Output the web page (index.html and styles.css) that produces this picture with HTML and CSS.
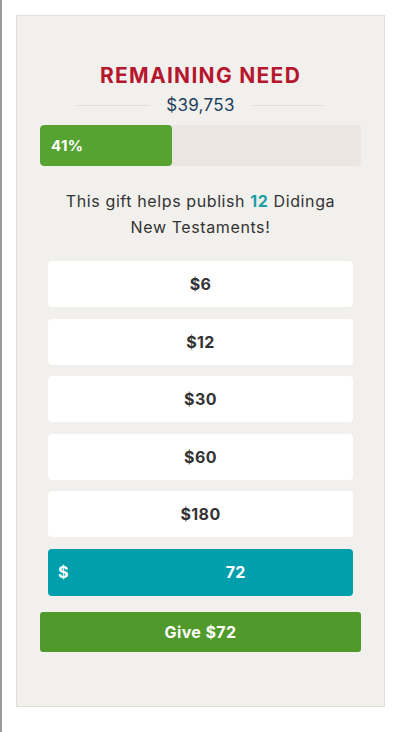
FILE: index.html
```html
<!DOCTYPE html>
<html lang="en">

<head>
    <meta charset="UTF-8">
    <meta name="viewport" content="width=device-width, initial-scale=1.0">
    <title>Didinga New Testament</title>
    <link rel="stylesheet" href="styles.css">
</head>

<body>
    <div class="frame">
        <div class="card">
            <h1 class="need-title">REMAINING NEED</h1>
            <div class="need-amount">
                <span class="rule"></span>
                <span>$39,753</span>
                <span class="rule"></span>
            </div>

            <div class="progress">
                <div class="progress-fill" style="width: 41%">41%</div>
            </div>

            <p class="impact">This gift helps publish <b>12</b> Didinga New Testaments!</p>

            <div class="amounts">
                <button class="amount">$6</button>
                <button class="amount">$12</button>
                <button class="amount">$30</button>
                <button class="amount">$60</button>
                <button class="amount">$180</button>
                <label class="custom">
                    <span class="custom-sign">$</span>
                    <input type="text" value="72">
                </label>
            </div>

            <button class="give">Give $72</button>
        </div>
    </div>
</body>

</html>
```

FILE: styles.css
```css
body {
    font-family: Inter, "Liberation Sans", sans-serif;
    margin: 0;
    padding: 0;
    background-color: #fff;
    color: #333;
}

.frame {
    height: 732px;
    box-sizing: border-box;
    border-left: 2px solid #9b9b9b;
    padding: 15px 15px 0 14px;
}

.card {
    height: 692px;
    box-sizing: border-box;
    background-color: #f2f0ed;
    border: 1px solid #e2dfdb;
    padding: 47px 23px 0 23px;
    text-align: center;
}

.need-title {
    margin: 0;
    font-size: 21px;
    line-height: 26px;
    font-weight: 700;
    letter-spacing: 1.3px;
    color: #b5172e;
}

.need-amount {
    display: flex;
    align-items: center;
    justify-content: center;
    gap: 16px;
    margin-top: 6px;
    font-size: 17px;
    line-height: 20px;
    letter-spacing: 0.3px;
    color: #1e3f5e;
}

.need-amount .rule {
    width: 74px;
    height: 1px;
    background-color: #e3e0dc;
}

.progress {
    margin-top: 10px;
    height: 41px;
    border-radius: 4px;
    background-color: #ebe6e2;
    overflow: hidden;
}

.progress-fill {
    height: 100%;
    box-sizing: border-box;
    padding-left: 11px;
    display: flex;
    align-items: center;
    border-radius: 4px;
    background-color: #56a332;
    color: #fff;
    font-weight: 700;
    font-size: 15px;
    letter-spacing: 0.4px;
}

.impact {
    margin: 22px 18px 0 18px;
    font-size: 16px;
    line-height: 26px;
    letter-spacing: 0.6px;
    color: #333;
}

.impact b {
    color: #1b9fa5;
}

.amounts {
    display: flex;
    flex-direction: column;
    gap: 11.5px;
    margin: 21px 8px 0 8px;
}

.amount {
    height: 46px;
    border: none;
    border-radius: 4px;
    background-color: #fff;
    font-family: inherit;
    font-size: 16px;
    font-weight: 700;
    letter-spacing: 0.4px;
    color: #333;
}

.custom {
    display: flex;
    align-items: center;
    height: 47px;
    border-radius: 4px;
    background-color: #009fab;
    color: #fff;
    font-weight: 700;
    font-size: 16px;
}

.custom-sign {
    padding-left: 10px;
}

.custom input {
    flex: 1;
    min-width: 0;
    padding: 0 0 0 50px;
    border: none;
    background: transparent;
    color: #fff;
    font-family: inherit;
    font-size: 16px;
    font-weight: 700;
    letter-spacing: 0.4px;
    text-align: center;
}

.give {
    display: block;
    width: 100%;
    height: 40px;
    margin-top: 16px;
    border: none;
    border-radius: 3px;
    background-color: #4f9a2a;
    color: #fff;
    font-family: inherit;
    font-size: 16px;
    font-weight: 700;
    letter-spacing: 0.4px;
}
```
